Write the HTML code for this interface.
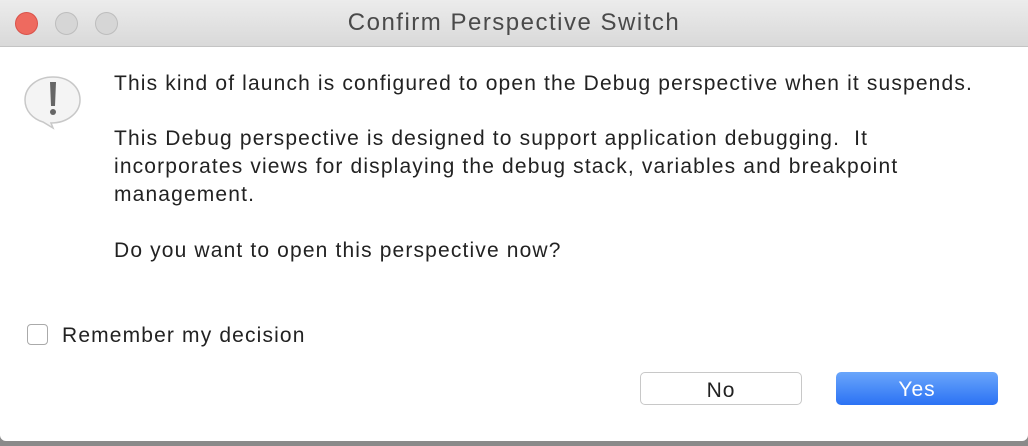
<!DOCTYPE html>
<html><head><style>
body{margin:0;width:1028px;height:446px;background:#8a8a8a;overflow:hidden;font-family:"Liberation Sans",sans-serif;}
.win{position:absolute;left:0;top:0;width:1028px;height:441px;background:#fff;border-radius:0 0 6px 6px;overflow:hidden}
.tb{height:46px;background:linear-gradient(#ececec,#d9d9d9);border-bottom:1px solid #c4c4c4;position:relative}
.dot{position:absolute;top:12px;width:23px;height:23px;border-radius:50%;box-sizing:border-box}
.title{position:absolute;left:0;right:0;top:9px;text-align:center;font-size:24px;letter-spacing:1.5px;color:#4a4a4a}
.t{position:absolute;left:114px;font-size:21px;letter-spacing:1.15px;color:#222;line-height:28px;white-space:nowrap}
.btn{position:absolute;top:372px;height:33px;border-radius:5px;box-sizing:border-box;text-align:center;line-height:35px;font-size:21px;letter-spacing:1px}
</style></head><body>
<div class="win">
<div class="tb">
<div class="dot" style="left:15px;background:#ee6a5f;border:1px solid #d9524a"></div>
<div class="dot" style="left:55px;background:#d6d6d6;border:1px solid #bdbdbd"></div>
<div class="dot" style="left:95px;background:#d6d6d6;border:1px solid #bdbdbd"></div>
<div class="title">Confirm Perspective Switch</div>
</div>
<svg style="position:absolute;left:22px;top:74px" width="62" height="56" viewBox="0 0 62 56">
<path d="M31 3C15 3 3 13 3 26c0 11 8 19 18 22l10 6-2-5c16 0 29-10 29-23S47 3 31 3z" fill="#f4f4f4" stroke="#c8c8c8" stroke-width="1.5"/>
<path d="M28 8h6l-1 24h-4z" fill="#666"/><circle cx="31" cy="38" r="3" fill="#666"/>
</svg>
<div class="t" style="top:70px">This kind of launch is configured to open the Debug perspective when it suspends.</div>
<div class="t" style="top:125px">This Debug perspective is designed to support application debugging.&nbsp; It<br>incorporates views for displaying the debug stack, variables and breakpoint<br>management.</div>
<div class="t" style="top:237px">Do you want to open this perspective now?</div>
<div style="position:absolute;left:27px;top:324px;width:21px;height:21px;border:1px solid #aaa;border-radius:4px;box-sizing:border-box;background:#fff"></div>
<div class="t" style="left:62px;top:322px">Remember my decision</div>
<div class="btn" style="left:640px;width:162px;border:1px solid #c8c8c8;background:#fff;color:#222">No</div>
<div class="btn" style="left:836px;width:162px;background:linear-gradient(#6aa6fb,#2b72f4);color:#fff">Yes</div>
</div>
</body></html>
